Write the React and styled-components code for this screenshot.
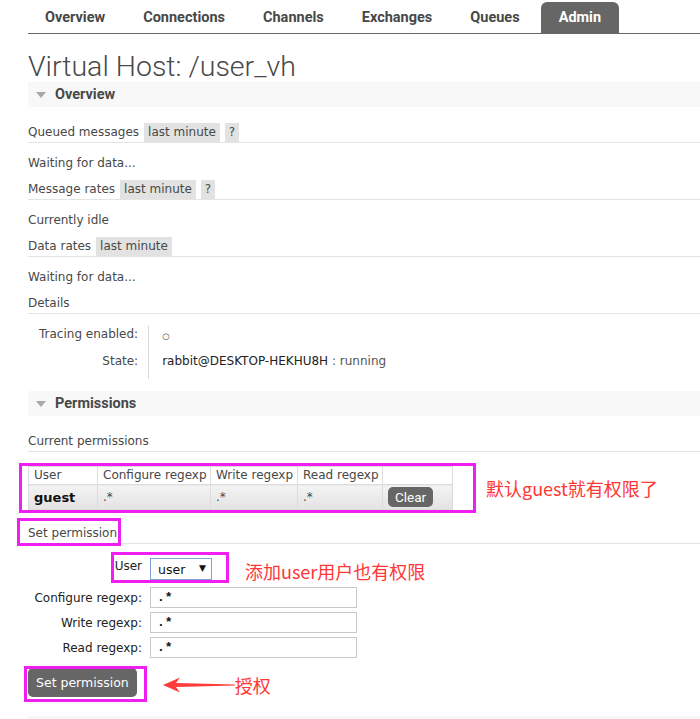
import React from "react";
import styled, { createGlobalStyle } from "styled-components";

const GlobalStyle = createGlobalStyle`
  html, body {
    margin: 0;
    padding: 0;
    background: #fff;
    overflow: hidden;
  }
  body {
    font-family: "DejaVu Sans", Verdana, sans-serif;
    font-size: 12px;
    color: #484848;
  }
`;

const HEAD_FONT = `Roboto, "Liberation Sans", sans-serif`;
const MAGENTA = "#f01ef0";
const NOTE_RED = "#ff3636";

const tabs = ["Overview", "Connections", "Channels", "Exchanges", "Queues", "Admin"];

const Page = styled.div`
  padding-left: 28px;
  width: 672px;
`;

const Nav = styled.nav`
  display: flex;
  align-items: flex-end;
  gap: 4px;
  height: 33px;
  border-bottom: 1px solid #666;
`;

const Tab = styled.div`
  height: 31px;
  line-height: 31px;
  padding: 0 ${(p) => (p.$active ? 18 : 17)}px;
  font-family: ${HEAD_FONT};
  font-weight: 700;
  font-size: 14.5px;
  color: ${(p) => (p.$active ? "#fff" : "#484848")};
  background: ${(p) => (p.$active ? "#666" : "transparent")};
  border-radius: 6px 6px 0 0;
`;

const Title = styled.h1`
  margin: 17px 0 0;
  font-family: ${HEAD_FONT};
  font-weight: 300;
  font-size: 28.5px;
  line-height: 31px;
  color: #484848;
`;

const SectionHeader = styled.div`
  display: flex;
  align-items: center;
  gap: 9px;
  height: 25px;
  padding-left: 8px;
  margin-top: ${(p) => p.$top || 0}px;
  background: #f8f8f8;
  font-family: ${HEAD_FONT};
  font-weight: 700;
  font-size: 14.5px;
  color: #484848;
`;

const Caret = styled.span`
  width: 0;
  height: 0;
  border-left: 5px solid transparent;
  border-right: 5px solid transparent;
  border-top: 6px solid #a8a8a8;
`;

const SectionBody = styled.div`
  padding-top: 16px;
`;

const Heading = styled.div`
  position: relative;
  display: flex;
  align-items: stretch;
  gap: 5px;
  height: 19px;
  line-height: 19px;
  border-bottom: 1px solid #e4e4e4;
  margin-top: ${(p) => p.$top || 0}px;
`;

const Tag = styled.span`
  background: #e2e2e2;
  padding: 0 4px;
`;

const Para = styled.p`
  margin: 12px 0 9px;
  line-height: 16px;
`;

const Details = styled.table`
  border-collapse: collapse;
  margin-top: 12px;

  th {
    font-weight: normal;
    text-align: right;
    padding: 0 10px 10px 11px;
    border-right: 1px solid #d8d8d8;
    line-height: 16px;
    vertical-align: top;
  }
  td {
    padding: 0 0 10px 13px;
    line-height: 16px;
    vertical-align: top;
  }
`;

const Dot = styled.span`
  font-size: 8.5px;
  color: #333;
  position: relative;
  top: 1px;
`;

const Host = styled.span`
  color: #222;
`;

const Running = styled.span`
  color: #555;
`;

const NoteRow = styled.div`
  display: flex;
  align-items: center;
  gap: ${(p) => p.$gap}px;
  margin-top: ${(p) => p.$top || 0}px;
`;

const Framed = styled.div`
  position: relative;
`;

const Highlight = styled.div`
  position: absolute;
  left: ${(p) => p.$x}px;
  top: ${(p) => p.$y}px;
  width: ${(p) => p.$w}px;
  height: ${(p) => p.$h}px;
  box-sizing: border-box;
  border: 3px solid ${MAGENTA};
  pointer-events: none;
`;

const Note = styled.span`
  font-family: "Noto Sans CJK SC", "Noto Sans", sans-serif;
  font-size: 18px;
  line-height: ${(p) => p.$lh || 24}px;
  margin-left: ${(p) => p.$left || 0}px;
  color: ${NOTE_RED};
  white-space: nowrap;
`;

const PermTable = styled.table`
  border-collapse: collapse;
  table-layout: fixed;
  width: 424px;

  th,
  td {
    border: 1px solid #dcdcdc;
    padding: 0 5px;
    text-align: left;
    white-space: nowrap;
  }
  th {
    font-weight: normal;
    height: 17px;
    line-height: 17px;
    background: #fff;
  }
  td {
    height: 24px;
    background: linear-gradient(#f3f3f3, #e3e3e3);
  }
`;

const UserCell = styled.td`
  && {
    font-weight: 700;
    color: #111;
    font-size: 13px;
  }
`;

const GrayButton = styled.button`
  border: none;
  border-radius: 5px;
  background: #666;
  color: #fff;
  cursor: pointer;
  font-family: ${(p) => (p.$small ? HEAD_FONT : `"DejaVu Sans", Verdana, sans-serif`)};
  font-size: ${(p) => (p.$small ? 13.5 : 12.5)}px;
  height: ${(p) => (p.$small ? 20 : 29)}px;
  padding: 0 ${(p) => (p.$small ? 7 : 8)}px;
  display: block;
`;

const Form = styled.div`
  margin-top: 14px;
  display: flex;
  flex-direction: column;
  gap: 4px;
`;

const FormRow = styled.div`
  position: relative;
  display: flex;
  align-items: ${(p) => (p.$top ? "flex-start" : "center")};
  height: ${(p) => p.$h || 21}px;
  margin-bottom: ${(p) => p.$after || 0}px;
`;

const Label = styled.label`
  width: 114px;
  margin-right: 8px;
  text-align: right;
  line-height: 16px;
  color: #222;
`;

const SelectWrap = styled.div`
  position: relative;
  width: 62px;
  height: 22px;
`;

const Select = styled.select`
  appearance: none;
  width: 100%;
  height: 100%;
  box-sizing: border-box;
  border: 1px solid #7ea1d8;
  background: #fff;
  padding: 0 0 0 7px;
  font-family: "DejaVu Sans", Verdana, sans-serif;
  font-size: 12.5px;
  color: #111;
`;

const SelectArrow = styled.span`
  position: absolute;
  right: 6px;
  top: 5px;
  font-size: 9px;
  color: #111;
  pointer-events: none;
`;

const Input = styled.input`
  width: 207px;
  height: 21px;
  box-sizing: border-box;
  border: 1px solid #c8c8c8;
  padding: 0 6px;
  font-family: "Liberation Mono", monospace;
  font-size: 13px;
  font-weight: 700;
  color: #111;
`;

const ButtonRow = styled.div`
  position: relative;
  display: flex;
  align-items: flex-start;
  margin-top: 10px;
`;

const Pointer = styled.div`
  display: flex;
  align-items: center;
  margin: 5px 0 0 26px;
`;

const Arrow = () => (
  <svg width="72" height="16" viewBox="0 0 72 16">
    <path d="M0 8 L17 0.5 L13 6 L72 7.4 L72 8.6 L13 10 L17 15.5 Z" fill="#ff3b3b" />
  </svg>
);

export default function App() {
  return (
    <Page>
      <GlobalStyle />
      <Nav>
        {tabs.map((t) => (
          <Tab key={t} $active={t === "Admin"}>
            {t}
          </Tab>
        ))}
      </Nav>

      <Title>Virtual Host: /user_vh</Title>

      <SectionHeader>
        <Caret />
        Overview
      </SectionHeader>
      <SectionBody>
        <Heading>
          Queued messages <Tag>last minute</Tag> <Tag>?</Tag>
        </Heading>
        <Para>Waiting for data...</Para>
        <Heading>
          Message rates <Tag>last minute</Tag> <Tag>?</Tag>
        </Heading>
        <Para>Currently idle</Para>
        <Heading>
          Data rates <Tag>last minute</Tag>
        </Heading>
        <Para>Waiting for data...</Para>
        <Heading>Details</Heading>
        <Details>
          <tbody>
            <tr>
              <th>Tracing enabled:</th>
              <td>
                <Dot>○</Dot>
              </td>
            </tr>
            <tr>
              <th>State:</th>
              <td>
                <Host>rabbit@DESKTOP-HEKHU8H</Host> <Running>: running</Running>
              </td>
            </tr>
          </tbody>
        </Details>
      </SectionBody>

      <SectionHeader $top={12}>
        <Caret />
        Permissions
      </SectionHeader>
      <SectionBody>
        <Heading>Current permissions</Heading>

        <NoteRow $gap={33} $top={14}>
          <Framed>
            <PermTable>
              <colgroup>
                <col style={{ width: 69 }} />
                <col style={{ width: 113 }} />
                <col style={{ width: 87 }} />
                <col style={{ width: 85 }} />
                <col style={{ width: 70 }} />
              </colgroup>
              <thead>
                <tr>
                  <th>User</th>
                  <th>Configure regexp</th>
                  <th>Write regexp</th>
                  <th>Read regexp</th>
                  <th></th>
                </tr>
              </thead>
              <tbody>
                <tr>
                  <UserCell>guest</UserCell>
                  <td>.*</td>
                  <td>.*</td>
                  <td>.*</td>
                  <td>
                    <GrayButton $small>Clear</GrayButton>
                  </td>
                </tr>
              </tbody>
            </PermTable>
            <Highlight $x={-9} $y={-3} $w={457} $h={50} />
          </Framed>
          <Note>默认guest就有权限了</Note>
        </NoteRow>

        <Heading $top={14}>
          Set permission
          <Highlight $x={-11} $y={-6} $w={104} $h={28} />
        </Heading>

        <Form>
          <FormRow $top $h={22} $after={3}>
            <Label>User</Label>
            <SelectWrap>
              <Select defaultValue="user">
                <option value="user">user</option>
                <option value="guest">guest</option>
              </Select>
              <SelectArrow>▼</SelectArrow>
            </SelectWrap>
            <Note $left={33} $lh={26}>
              添加user用户也有权限
            </Note>
            <Highlight $x={83} $y={-6} $w={118} $h={31} />
          </FormRow>
          <FormRow>
            <Label>Configure regexp:</Label>
            <Input defaultValue=".*" />
          </FormRow>
          <FormRow>
            <Label>Write regexp:</Label>
            <Input defaultValue=".*" />
          </FormRow>
          <FormRow>
            <Label>Read regexp:</Label>
            <Input defaultValue=".*" />
          </FormRow>
        </Form>

        <ButtonRow>
          <GrayButton>Set permission</GrayButton>
          <Pointer>
            <Arrow />
            <Note>授权</Note>
          </Pointer>
          <Highlight $x={-4} $y={-2} $w={123} $h={36} />
        </ButtonRow>
      </SectionBody>

      <SectionHeader $top={19}>
        <Caret />
      </SectionHeader>
    </Page>
  );
}
